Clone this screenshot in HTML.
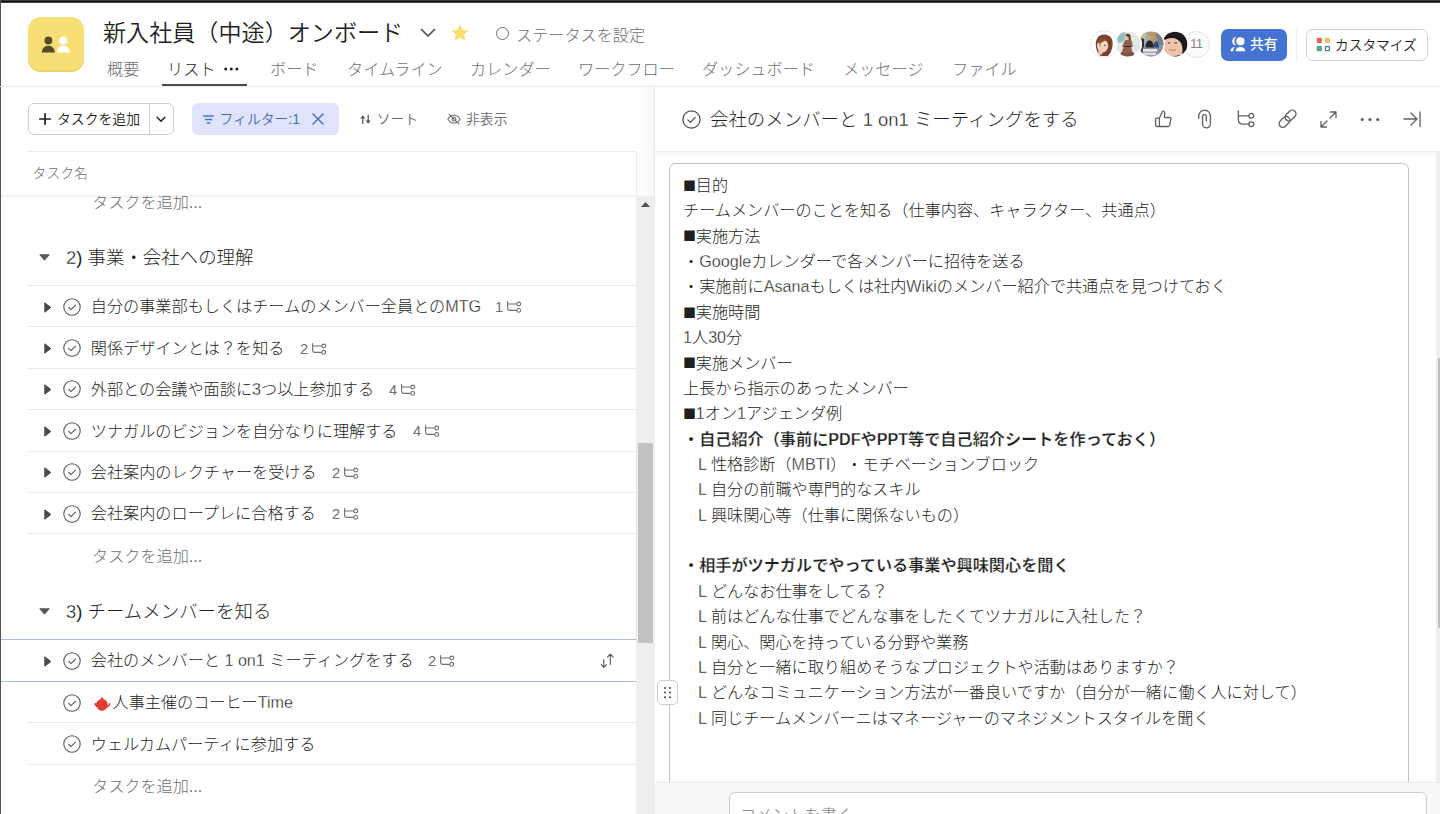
<!DOCTYPE html>
<html lang="ja">
<head>
<meta charset="utf-8">
<title>新入社員（中途）オンボード</title>
<style>
*{box-sizing:border-box;margin:0;padding:0}
html,body{width:1440px;height:814px;overflow:hidden;background:#fff}
body{font-family:"Liberation Sans","Noto Sans CJK JP",sans-serif;color:#1e1f21;position:relative;font-weight:400;text-spacing-trim:space-all}
.abs{position:absolute}
.t{position:absolute;white-space:nowrap;line-height:1}
svg{position:absolute;overflow:visible}
#topbar{left:0;top:0;width:1440px;height:3px;background:linear-gradient(#38393b 0,#38393b 33%,#131314 33%,#131314 67%,#3c3c3d 67%)}
#leftedge{left:0;top:0;width:1px;height:814px;background:#565656}
#picon{left:28.300px;top:16.800px;width:55.400px;height:54.800px;border-radius:13px;background:#f7df75;box-shadow:inset 0 -1.500px 0 rgba(210,180,70,.35)}
#title{left:103px;top:22px;font-size:23.1px;color:#1e1f21;font-weight:350}
  .tab{font-size:16.15px;color:#6d6e6f;top:61px;font-weight:300}
.hl{position:absolute;height:1px;background:#eeebea}
.vl{position:absolute;width:1px;background:#edeae9}
.g{color:#6d6e6f}
.btn{position:absolute;border:1px solid #cfcbcb;border-radius:6px;background:#fff}
.row{position:absolute;left:28px;width:608px;height:42px;border-top:1px solid #edeae9}
.rt{position:absolute;left:62.8px;top:12.4px;font-size:16.15px;line-height:1;white-space:nowrap;color:#1e1f21;font-weight:300}
.cnt{position:absolute;top:14.300px;font-size:14.600px;line-height:1;color:#6d6e6f;font-weight:300}
.sec{position:absolute;left:66px;font-size:18.45px;line-height:1;white-space:nowrap;color:#1e1f21;font-weight:300}
.addt{position:absolute;left:92px;font-size:16.15px;line-height:1;white-space:nowrap;color:#6d6e6f;font-weight:300}
.d{position:absolute;left:683px;font-size:16.15px;line-height:1;white-space:nowrap;color:#1e1f21;font-weight:300}
.d.b{font-weight:700;-webkit-text-stroke:.25px #fff}
.l{-webkit-text-stroke:.3px #fff}
.sq{font-size:21.400px;display:inline-block;width:12.600px;position:relative;top:.8px;line-height:0;margin-left:.2px}
</style>
</head>
<body>
<div class="abs" id="topbar"></div>
<div class="abs" id="leftedge"></div>
<div class="abs" id="picon">
<svg width="56" height="56" viewBox="0 0 56 56" style="left:0;top:0">
<circle cx="20.400" cy="23.500" r="3.900" fill="#574a28"/>
<path d="M13.900 35.600c0-4.600 2.900-6.900 6.450-6.900s6.450 2.300 6.450 6.900z" fill="#574a28"/>
<circle cx="35.250" cy="23.500" r="4.100" fill="#fff"/>
<path d="M28.800 35.600c0-4.600 2.900-6.900 6.500-6.900s6.500 2.300 6.500 6.900z" fill="#fff"/>
</svg>
</div>
<div class="t" id="title">新入社員（中途）オンボード</div>
<svg style="left:420px;top:28px" width="16" height="10" viewBox="0 0 16 10"><path d="M1.5 1.5 8 8l6.5-6.5" fill="none" stroke="#4a4b4d" stroke-width="1.7" stroke-linecap="round" stroke-linejoin="round"/></svg>
<svg style="left:451px;top:24px" width="18" height="18" viewBox="0 0 18 18"><path d="M9 1.2l2.3 5 5.4.6-4 3.7 1.1 5.4L9 13.2l-4.8 2.7 1.1-5.4-4-3.7 5.4-.6z" fill="#f8df72" stroke="#f8df72" stroke-width="1" stroke-linejoin="round"/></svg>
<div class="abs" style="left:496px;top:27px;width:13px;height:13px;border:1.3px solid #6d6e6f;border-radius:50%"></div>
<div class="t g" style="left:516px;top:26.7px;font-size:16.15px;font-weight:300">ステータスを設定</div>
<div class="t tab" style="left:107px">概要</div>
<div class="t tab" style="left:167px;color:#1e1f21;font-weight:300">リスト</div>
<div class="t tab" style="left:270px">ボード</div>
<div class="t tab" style="left:347px">タイムライン</div>
<div class="t tab" style="left:470px">カレンダー</div>
<div class="t tab" style="left:578px">ワークフロー</div>
<div class="t tab" style="left:702px">ダッシュボード</div>
<div class="t tab" style="left:843px">メッセージ</div>
<div class="t tab" style="left:952px">ファイル</div>
<svg style="left:224px;top:67px" width="15" height="4" viewBox="0 0 15 4"><circle cx="1.7" cy="2" r="1.5" fill="#1e1f21"/><circle cx="7.3" cy="2" r="1.5" fill="#1e1f21"/><circle cx="12.9" cy="2" r="1.5" fill="#1e1f21"/></svg>
<div class="abs" style="left:162px;top:84px;width:85px;height:2px;background:#4a4b4d"></div>
<div class="hl" style="left:0;top:86px;width:1440px"></div>
<div class="abs" style="left:1183px;top:30.500px;width:27px;height:27px;border-radius:50%;border:1px solid #e4e2e2;background:#fbfbfb"></div><div class="t g" style="left:1190.300px;top:38.200px;font-size:12.500px;font-weight:400;color:#808183;letter-spacing:-.3px">11</div>
<svg style="left:1090.2px;top:30.200px;z-index:10" width="28" height="28" viewBox="0 0 28 28"><defs><clipPath id="c0"><circle cx="14" cy="14" r="12.400"/></clipPath></defs><circle cx="14" cy="14" r="14" fill="#fff"/><circle cx="14" cy="14" r="13.400" fill="none" stroke="#eadcf2" stroke-width=".8"/><g clip-path="url(#c0)"><rect width="28" height="28" fill="#fff"/><path d="M6 17c-1-7 2-12.500 8-12.500 6.500 0 9.500 5 8.500 11-.5 4-2 8-4.500 10.500H10.500C8 23.500 6.500 21 6 17z" fill="#7a3f28"/><ellipse cx="12.600" cy="15.800" rx="5.600" ry="6.600" fill="#f2d3c0"/><path d="M7 12c2-4 7-5 11-2-3 .5-6 1.500-8 4z" fill="#8a4a30"/><ellipse cx="10" cy="15.300" rx="1" ry=".8" fill="#4b6a86"/><ellipse cx="15" cy="15.300" rx="1" ry=".8" fill="#4b6a86"/><path d="M8.500 20c0-2 1.200-5 2.200-5s1 2 1.300 4c.8 1.500 1 3.500 0 5.500H8.500z" fill="#efc9b2"/></g></svg>
<svg style="left:1113.6px;top:30.200px;z-index:9" width="28" height="28" viewBox="0 0 28 28"><defs><clipPath id="c1"><circle cx="14" cy="14" r="12.400"/></clipPath></defs><circle cx="14" cy="14" r="14" fill="#fff"/><circle cx="14" cy="14" r="13.400" fill="none" stroke="#fff" stroke-width=".8"/><g clip-path="url(#c1)"><rect width="28" height="28" fill="#e4e7e4"/><path d="M0 0h12v11c-3 2-8 3-12 1z" fill="#b9d3d2"/><path d="M2 2c4-2 8-1 9 3s-2 7-6 7-5-6-3-10z" fill="#8fbfc0"/><rect x="0" y="21" width="28" height="7" fill="#efeeec"/><circle cx="13.800" cy="6.800" r="2.600" fill="#e3bda4"/><path d="M11.500 5.500c.5-2.500 4.500-2.500 5 .5l.5 5h-2l-.5-4z" fill="#5d3a2a"/><path d="M11 10.500c2-1.500 5-1.500 6.500 0l1.500 6-2 .5 2.500 8.500c-4 1.500-9 1.500-13 0L9.500 17l-1.500-.5z" fill="#8c6049"/><path d="M10.500 16.500h7" stroke="#3c2a22" stroke-width="1"/><path d="M7 22c3 1 8 1.500 12.500 0l.8 3.500c-5 1.500-10 1.500-14.500 0z" fill="#7a5340"/></g></svg>
<svg style="left:1137px;top:30.200px;z-index:8" width="28" height="28" viewBox="0 0 28 28"><defs><clipPath id="c2"><circle cx="14" cy="14" r="12.400"/></clipPath></defs><circle cx="14" cy="14" r="14" fill="#fff"/><circle cx="14" cy="14" r="13.400" fill="none" stroke="#fff" stroke-width=".8"/><g clip-path="url(#c2)"><rect width="28" height="28" fill="#8f9aa2"/><rect x="11" y="2" width="8" height="11" fill="#b39a68"/><rect x="19" y="2" width="9" height="13" fill="#77838d"/><rect x="2" y="2" width="9" height="12" fill="#9fb0bd"/><path d="M3 3l6 1-1 5-5-1z" fill="#c9c27a"/><circle cx="12.600" cy="8" r="2" fill="#c99f85"/><path d="M8.500 19c0-6 1.500-8.500 4-8.500s4.500 2.500 4.500 8.500z" fill="#23262b"/><circle cx="19" cy="9.500" r="1.600" fill="#b98f78"/><path d="M16.500 19c0-5 1-7.500 2.700-7.500S22 14 22 19z" fill="#2e4a6e"/><path d="M4 8l3 1v10H4z" fill="#2b2d31"/><rect x="2" y="17.500" width="24" height="9" fill="#8b8f96"/><rect x="6" y="19" width="14" height="2.600" fill="#e9eaec"/><rect x="6" y="22.600" width="13" height="2.600" fill="#dfe0e3"/><rect x="2" y="17.500" width="4" height="9" fill="#4a4d52"/></g></svg>
<svg style="left:1160.6px;top:30.200px;z-index:7" width="28" height="28" viewBox="0 0 28 28"><defs><clipPath id="c3"><circle cx="14" cy="14" r="12.400"/></clipPath></defs><circle cx="14" cy="14" r="14" fill="#fff"/><circle cx="14" cy="14" r="13.400" fill="none" stroke="#fff" stroke-width=".8"/><g clip-path="url(#c3)"><rect width="28" height="28" fill="#e8bca3"/><ellipse cx="12" cy="15" rx="9" ry="10.500" fill="#edc4ab"/><path d="M2 9C4 4 9 2 14 2c5 0 9 2 11 6 2 5 2 13 0 20h-5c2-5 2-11 0-15-2-3-5-5-9-5-4 0-7 1-9 4z" fill="#1c1819"/><path d="M1 20c1 2 3 4 5 5l-1 3H1z" fill="#2c8a92"/><path d="M4 25.500c4 1.500 9 1.500 14-.5l5 3H3z" fill="#222021"/><path d="M8 19.500c2 1.300 5 1.300 7 0" stroke="#c4736a" stroke-width="1" fill="none"/><ellipse cx="8" cy="12.800" rx="1.400" ry=".6" fill="#3a2a26"/><ellipse cx="14.800" cy="12.800" rx="1.400" ry=".6" fill="#3a2a26"/></g></svg>
<div class="abs" style="left:1221.300px;top:28.700px;width:65.700px;height:32px;border-radius:7px;background:#4573d2"></div>
<svg style="left:1230px;top:37px" width="16" height="15" viewBox="0 0 16 15"><circle cx="10.400" cy="4.300" r="4.100" fill="#fff"/><path d="M5.600 14.300c0-2.900 2-4.300 4.800-4.300s4.800 1.400 4.800 4.300z" fill="#fff"/><path d="M5.800.3A4.100 4.100 0 0 0 5.600 8.300 5.600 5.600 0 0 1 5.800.3z" fill="#fff" stroke="#fff" stroke-width=".6"/><path d="M.5 14.300c0-2.600 1.700-4 4.300-4.200-1 1-1.500 2.400-1.500 4.200z" fill="#fff"/></svg>
<div class="t" style="left:1250px;top:38px;font-size:13.840px;color:#fff;font-weight:500">共有</div>
<div class="vl" style="left:1296px;top:29px;height:32px;background:#f0eeed"></div>
<div class="btn" style="left:1306px;top:28.700px;width:122px;height:32px;border-color:#d5d2d1;border-radius:7px"></div>
<svg style="left:1316px;top:37px" width="15" height="15" viewBox="0 0 15 15"><rect x="0.700" y="0.800" width="5.200" height="5.200" rx="1" fill="#e8645a"/><rect x="8.800" y="0.800" width="5.200" height="5.200" rx="1" fill="#f1bd6c"/><rect x="0.700" y="9" width="5.200" height="5.200" rx="1" fill="#5da283"/><rect x="9.400" y="9.600" width="4" height="4" rx="0.300" fill="none" stroke="#4573d2" stroke-width="1.200"/></svg>
<div class="t" style="left:1335px;top:38.500px;font-size:13.700px;color:#1e1f21;font-weight:350">カスタマイズ</div>
<div class="btn" style="left:28px;top:103px;width:146px;height:32px"></div><div class="vl" style="left:149px;top:104px;height:30px;background:#d5d2d1"></div>
<svg style="left:39px;top:113px" width="12" height="12" viewBox="0 0 12 12"><path d="M6 0.8v10.400M0.8 6h10.400" stroke="#1e1f21" stroke-width="1.7" stroke-linecap="round"/></svg>
<div class="t" style="left:57px;top:113px;font-size:13.84px;font-weight:350">タスクを追加</div>
<svg style="left:156px;top:116px" width="10" height="7" viewBox="0 0 10 7"><path d="M1.200 1.200 5 5.200l3.800-4" fill="none" stroke="#1e1f21" stroke-width="1.5" stroke-linecap="round" stroke-linejoin="round"/></svg>
<div class="abs" style="left:192px;top:103px;width:147px;height:32px;border-radius:6px;background:#dfe3fc"></div>
<svg style="left:203px;top:115px" width="11" height="9" viewBox="0 0 11 9"><path d="M0.700 1h9.600M2.400 4.500h6.200M4.200 8h2.600" stroke="#4573d2" stroke-width="1.300" stroke-linecap="round"/></svg>
<div class="t" style="left:219.5px;top:112.5px;font-size:13.84px;color:#3f6ac4;font-weight:350">フィルター:1</div>
<svg style="left:312px;top:113px" width="12" height="12" viewBox="0 0 12 12"><path d="M1 1l10 10M11 1 1 11" stroke="#3f6ac4" stroke-width="1.400" stroke-linecap="round"/></svg>
<svg style="left:359.5px;top:114.5px" width="11" height="9" viewBox="0 0 11 9"><path d="M2.800 8.500V2.500M8.200 0.500v6" fill="none" stroke="#57585a" stroke-width="1.300" stroke-linecap="round"/><path d="M0.200 3.600 2.800 0.200l2.600 3.400zM5.600 5.400l2.600 3.400 2.600-3.400z" fill="#57585a"/></svg>
<div class="t g" style="left:376.8px;top:113.3px;font-size:13.84px;font-weight:350">ソート</div>
<svg style="left:447px;top:113px" width="14" height="12.300" viewBox="0 0 16 14"><path d="M1 7c1.800-3 4.200-4.500 7-4.500S13.200 4 15 7c-1.800 3-4.200 4.500-7 4.500S2.800 10 1 7z" fill="none" stroke="#6d6e6f" stroke-width="1.200"/><circle cx="8" cy="7" r="2.200" fill="none" stroke="#6d6e6f" stroke-width="1.200"/><path d="M2.500 1.500l11 11" stroke="#6d6e6f" stroke-width="1.200" stroke-linecap="round"/></svg>
<div class="t g" style="left:466px;top:113.3px;font-size:13.84px;font-weight:350">非表示</div>
<div class="hl" style="left:28px;top:151px;width:609px"></div>
<div class="vl" style="left:636px;top:151px;height:663px"></div>
<div class="t g" style="left:32.6px;top:166.5px;font-size:13.84px;font-weight:300">タスク名</div>
<div class="abs" style="left:1px;top:195px;width:636px;height:4px;background:linear-gradient(#f1efee,#fff)"></div>
<div class="abs" style="left:1px;top:196px;width:635px;height:30px;overflow:hidden"><div class="addt" style="left:91px;top:-2px">タスクを追加...</div></div>
<svg style="left:39px;top:254.3px" width="11" height="7" viewBox="0 0 11 7"><path d="M0.800 0.800h9.400L5.500 6.200z" fill="#56575a" stroke="#56575a" stroke-width="1" stroke-linejoin="round"/></svg>
<div class="sec" style="top:249px"><span class="l">2</span>) 事業・会社への理解</div>
<div class="row" style="top:285.0px"><svg style="left:15.700px;top:15.500px" width="8" height="11" viewBox="0 0 8 11"><path d="M0.800 0.800 6.800 5.500 0.800 10.200z" fill="#4a4b4d" stroke="#4a4b4d" stroke-width="1" stroke-linejoin="round"/></svg><svg style="left:35px;top:11.7px" width="18" height="18" viewBox="0 0 18 18"><circle cx="9" cy="9" r="8.2" fill="none" stroke="#58595b" stroke-width="1.100"/><path d="M5.600 9.400l2.400 2.300 4.500-4.600" fill="none" stroke="#58595b" stroke-width="1.100" stroke-linecap="round" stroke-linejoin="round"/></svg><div class="rt">自分の事業部もしくはチームのメンバー全員との<span class="l">MTG</span></div><div class="cnt" style="left:467px">1</div><svg style="left:478.7px;top:15.300px" width="15" height="12" viewBox="0 0 15 12"><path d="M0.600 0.500v6.400c0 1.600.9 2.500 2.500 2.500H9.400M0.600 3H9.400" fill="none" stroke="#6d6e6f" stroke-width="1.100" stroke-linecap="round"/><circle cx="11.700" cy="3" r="1.900" fill="none" stroke="#6d6e6f" stroke-width="1.100"/><circle cx="11.700" cy="9.400" r="1.900" fill="none" stroke="#6d6e6f" stroke-width="1.100"/></svg></div>
<div class="row" style="top:326.4px"><svg style="left:15.700px;top:15.500px" width="8" height="11" viewBox="0 0 8 11"><path d="M0.800 0.800 6.800 5.500 0.800 10.200z" fill="#4a4b4d" stroke="#4a4b4d" stroke-width="1" stroke-linejoin="round"/></svg><svg style="left:35px;top:11.7px" width="18" height="18" viewBox="0 0 18 18"><circle cx="9" cy="9" r="8.2" fill="none" stroke="#58595b" stroke-width="1.100"/><path d="M5.600 9.400l2.400 2.300 4.500-4.600" fill="none" stroke="#58595b" stroke-width="1.100" stroke-linecap="round" stroke-linejoin="round"/></svg><div class="rt">関係デザインとは？を知る</div><div class="cnt" style="left:272px">2</div><svg style="left:283.7px;top:15.300px" width="15" height="12" viewBox="0 0 15 12"><path d="M0.600 0.500v6.400c0 1.600.9 2.500 2.500 2.500H9.400M0.600 3H9.400" fill="none" stroke="#6d6e6f" stroke-width="1.100" stroke-linecap="round"/><circle cx="11.700" cy="3" r="1.900" fill="none" stroke="#6d6e6f" stroke-width="1.100"/><circle cx="11.700" cy="9.400" r="1.900" fill="none" stroke="#6d6e6f" stroke-width="1.100"/></svg></div>
<div class="row" style="top:367.8px"><svg style="left:15.700px;top:15.500px" width="8" height="11" viewBox="0 0 8 11"><path d="M0.800 0.800 6.800 5.500 0.800 10.200z" fill="#4a4b4d" stroke="#4a4b4d" stroke-width="1" stroke-linejoin="round"/></svg><svg style="left:35px;top:11.7px" width="18" height="18" viewBox="0 0 18 18"><circle cx="9" cy="9" r="8.2" fill="none" stroke="#58595b" stroke-width="1.100"/><path d="M5.600 9.400l2.400 2.300 4.500-4.600" fill="none" stroke="#58595b" stroke-width="1.100" stroke-linecap="round" stroke-linejoin="round"/></svg><div class="rt">外部との会議や面談に<span class="l">3</span>つ以上参加する</div><div class="cnt" style="left:361px">4</div><svg style="left:372.7px;top:15.300px" width="15" height="12" viewBox="0 0 15 12"><path d="M0.600 0.500v6.400c0 1.600.9 2.500 2.500 2.500H9.400M0.600 3H9.400" fill="none" stroke="#6d6e6f" stroke-width="1.100" stroke-linecap="round"/><circle cx="11.700" cy="3" r="1.900" fill="none" stroke="#6d6e6f" stroke-width="1.100"/><circle cx="11.700" cy="9.400" r="1.900" fill="none" stroke="#6d6e6f" stroke-width="1.100"/></svg></div>
<div class="row" style="top:409.2px"><svg style="left:15.700px;top:15.500px" width="8" height="11" viewBox="0 0 8 11"><path d="M0.800 0.800 6.800 5.500 0.800 10.200z" fill="#4a4b4d" stroke="#4a4b4d" stroke-width="1" stroke-linejoin="round"/></svg><svg style="left:35px;top:11.7px" width="18" height="18" viewBox="0 0 18 18"><circle cx="9" cy="9" r="8.2" fill="none" stroke="#58595b" stroke-width="1.100"/><path d="M5.600 9.400l2.400 2.300 4.500-4.600" fill="none" stroke="#58595b" stroke-width="1.100" stroke-linecap="round" stroke-linejoin="round"/></svg><div class="rt">ツナガルのビジョンを自分なりに理解する</div><div class="cnt" style="left:385px">4</div><svg style="left:396.7px;top:15.300px" width="15" height="12" viewBox="0 0 15 12"><path d="M0.600 0.500v6.400c0 1.600.9 2.500 2.500 2.500H9.400M0.600 3H9.400" fill="none" stroke="#6d6e6f" stroke-width="1.100" stroke-linecap="round"/><circle cx="11.700" cy="3" r="1.900" fill="none" stroke="#6d6e6f" stroke-width="1.100"/><circle cx="11.700" cy="9.400" r="1.900" fill="none" stroke="#6d6e6f" stroke-width="1.100"/></svg></div>
<div class="row" style="top:450.6px"><svg style="left:15.700px;top:15.500px" width="8" height="11" viewBox="0 0 8 11"><path d="M0.800 0.800 6.800 5.500 0.800 10.200z" fill="#4a4b4d" stroke="#4a4b4d" stroke-width="1" stroke-linejoin="round"/></svg><svg style="left:35px;top:11.7px" width="18" height="18" viewBox="0 0 18 18"><circle cx="9" cy="9" r="8.2" fill="none" stroke="#58595b" stroke-width="1.100"/><path d="M5.600 9.400l2.400 2.300 4.500-4.600" fill="none" stroke="#58595b" stroke-width="1.100" stroke-linecap="round" stroke-linejoin="round"/></svg><div class="rt">会社案内のレクチャーを受ける</div><div class="cnt" style="left:304px">2</div><svg style="left:315.7px;top:15.300px" width="15" height="12" viewBox="0 0 15 12"><path d="M0.600 0.500v6.400c0 1.600.9 2.500 2.500 2.500H9.400M0.600 3H9.400" fill="none" stroke="#6d6e6f" stroke-width="1.100" stroke-linecap="round"/><circle cx="11.700" cy="3" r="1.900" fill="none" stroke="#6d6e6f" stroke-width="1.100"/><circle cx="11.700" cy="9.400" r="1.900" fill="none" stroke="#6d6e6f" stroke-width="1.100"/></svg></div>
<div class="row" style="top:492.0px"><svg style="left:15.700px;top:15.500px" width="8" height="11" viewBox="0 0 8 11"><path d="M0.800 0.800 6.800 5.500 0.800 10.200z" fill="#4a4b4d" stroke="#4a4b4d" stroke-width="1" stroke-linejoin="round"/></svg><svg style="left:35px;top:11.7px" width="18" height="18" viewBox="0 0 18 18"><circle cx="9" cy="9" r="8.2" fill="none" stroke="#58595b" stroke-width="1.100"/><path d="M5.600 9.400l2.400 2.300 4.500-4.600" fill="none" stroke="#58595b" stroke-width="1.100" stroke-linecap="round" stroke-linejoin="round"/></svg><div class="rt">会社案内のロープレに合格する</div><div class="cnt" style="left:304px">2</div><svg style="left:315.7px;top:15.300px" width="15" height="12" viewBox="0 0 15 12"><path d="M0.600 0.500v6.400c0 1.600.9 2.500 2.500 2.500H9.400M0.600 3H9.400" fill="none" stroke="#6d6e6f" stroke-width="1.100" stroke-linecap="round"/><circle cx="11.700" cy="3" r="1.900" fill="none" stroke="#6d6e6f" stroke-width="1.100"/><circle cx="11.700" cy="9.400" r="1.900" fill="none" stroke="#6d6e6f" stroke-width="1.100"/></svg></div>
<div class="hl" style="left:28px;top:533.4px;width:608px"></div>
<div class="addt" style="top:548px">タスクを追加...</div>
<svg style="left:39px;top:608.3px" width="11" height="7" viewBox="0 0 11 7"><path d="M0.800 0.800h9.400L5.500 6.200z" fill="#56575a" stroke="#56575a" stroke-width="1" stroke-linejoin="round"/></svg>
<div class="sec" style="top:603px"><span class="l">3</span>) チームメンバーを知る</div>
<div class="row" style="top:639px;border-top-color:transparent"><svg style="left:15.700px;top:15.500px" width="8" height="11" viewBox="0 0 8 11"><path d="M0.800 0.800 6.800 5.500 0.800 10.200z" fill="#4a4b4d" stroke="#4a4b4d" stroke-width="1" stroke-linejoin="round"/></svg><svg style="left:35px;top:11.7px" width="18" height="18" viewBox="0 0 18 18"><circle cx="9" cy="9" r="8.2" fill="none" stroke="#58595b" stroke-width="1.100"/><path d="M5.600 9.400l2.400 2.300 4.500-4.600" fill="none" stroke="#58595b" stroke-width="1.100" stroke-linecap="round" stroke-linejoin="round"/></svg><div class="rt">会社のメンバーと <span class="l">1 on1</span> ミーティングをする</div><div class="cnt" style="left:400px">2</div><svg style="left:411.7px;top:15.300px" width="15" height="12" viewBox="0 0 15 12"><path d="M0.600 0.500v6.400c0 1.600.9 2.500 2.500 2.500H9.400M0.600 3H9.400" fill="none" stroke="#6d6e6f" stroke-width="1.100" stroke-linecap="round"/><circle cx="11.700" cy="3" r="1.900" fill="none" stroke="#6d6e6f" stroke-width="1.100"/><circle cx="11.700" cy="9.400" r="1.900" fill="none" stroke="#6d6e6f" stroke-width="1.100"/></svg><svg style="left:571.500px;top:13px" width="16" height="16" viewBox="0 0 16 16"><path d="M3.800 6.500v7.700M1.200 11.600l2.600 2.700 2.600-2.700M10.300 11.500V1.200M7.500 4l2.800-2.900L13.100 4" fill="none" stroke="#57585a" stroke-width="1.100" stroke-linecap="round" stroke-linejoin="round"/></svg></div>
<div class="row" style="top:681px"><svg style="left:35px;top:11.7px" width="18" height="18" viewBox="0 0 18 18"><circle cx="9" cy="9" r="8.2" fill="none" stroke="#58595b" stroke-width="1.100"/><path d="M5.600 9.400l2.400 2.300 4.500-4.600" fill="none" stroke="#58595b" stroke-width="1.100" stroke-linecap="round" stroke-linejoin="round"/></svg><div class="rt"><span style="display:inline-block;width:21.700px"></span>人事主催のコーヒー<span class="l">Time</span></div><svg style="left:66px;top:15px" width="17" height="15" viewBox="0 0 17 15"><path d="M7 1.200c0-.8 2.400-.8 2.400 0v1c2.600.5 4.300 2.600 4.300 5.400 0 .4 0 .8-.1 1.200 1-.6 1.500-1.600 1.700-2.800l1.300.3c-.3 2.200-1.500 3.800-3.700 4.500-.9 1.700-2.600 2.900-4.700 2.900-2.300 0-4.200-1.300-5-3.300C1.600 9.800.5 8.200.2 6.200L2.600 6c.3-1.900 2-3.400 4.400-3.800z" fill="#e53a2f"/></svg></div>
<div class="row" style="top:722.4px"><svg style="left:35px;top:11.7px" width="18" height="18" viewBox="0 0 18 18"><circle cx="9" cy="9" r="8.2" fill="none" stroke="#58595b" stroke-width="1.100"/><path d="M5.600 9.400l2.400 2.300 4.500-4.600" fill="none" stroke="#58595b" stroke-width="1.100" stroke-linecap="round" stroke-linejoin="round"/></svg><div class="rt">ウェルカムパーティに参加する</div></div>
<div class="hl" style="left:28px;top:763.8px;width:608px"></div>
<div class="addt" style="top:778px">タスクを追加...</div>
<div class="hl" style="left:1px;top:639px;width:635px;background:#aebbe9"></div><div class="hl" style="left:1px;top:681px;width:635px;background:#aebbe9"></div>
<div class="abs" style="left:637px;top:87px;width:17px;height:109px;background:linear-gradient(90deg,#fff,#f8f7f7)"></div>
<div class="abs" style="left:637px;top:196px;width:17.500px;height:618px;background:#eeeeee"></div>
<svg style="left:641px;top:202px" width="9" height="5" viewBox="0 0 9 5"><path d="M4.500 0 9 5H0z" fill="#505050"/></svg>
<div class="abs" style="left:638px;top:443px;width:15px;height:200px;background:#c1c1c1"></div>
<div class="vl" style="left:654px;top:87px;height:109px;background:#e8e6e5"></div>
<svg style="left:682px;top:110px" width="19" height="19" viewBox="0 0 19 19"><circle cx="9.500" cy="9.500" r="8.600" fill="none" stroke="#4a4b4d" stroke-width="1.200"/><path d="M5.800 9.900l2.600 2.500 4.800-5" fill="none" stroke="#4a4b4d" stroke-width="1.200" stroke-linecap="round" stroke-linejoin="round"/></svg>
<div class="t" style="left:710px;top:111px;font-size:18.460px;font-weight:300">会社のメンバーと <span class="l">1 on1</span> ミーティングをする</div>
<svg style="left:1154px;top:110px" width="18" height="18" viewBox="0 0 18 18"><rect x="1.600" y="8.100" width="3.800" height="8.400" rx="1.200" fill="none" stroke="#5f6062" stroke-width="1.300" stroke-linecap="round" stroke-linejoin="round"/><path d="M5.400 8.100 8.200 2Q8.900.9 9.900 1.500 10.900 2.100 10.700 3.500L10.500 7.500H15.500Q17.200 7.500 16.900 9.200L15.700 15.200Q15.400 16.500 14.100 16.500H5.400" fill="none" stroke="#5f6062" stroke-width="1.300" stroke-linecap="round" stroke-linejoin="round"/></svg>
<svg style="left:1198px;top:109px" width="13" height="20" viewBox="0 0 13 20"><path d="M.75 9.300V7A5.800 5.800 0 0 1 12.400 7V15A3.950 3.950 0 0 1 4.500 15V7.500A1.900 1.900 0 0 1 8.300 7.500V11.800" fill="none" stroke="#5f6062" stroke-width="1.300" stroke-linecap="round" stroke-linejoin="round"/></svg>
<svg style="left:1237px;top:110px" width="18" height="18" viewBox="0 0 18 18"><path d="M1.300.8V9.200Q1.300 14.200 6.300 14.200H11.800M1.300 5.800H11.800" fill="none" stroke="#5f6062" stroke-width="1.300" stroke-linecap="round" stroke-linejoin="round"/><circle cx="14.250" cy="5.800" r="2.400" fill="none" stroke="#5f6062" stroke-width="1.300" stroke-linecap="round" stroke-linejoin="round"/><circle cx="14.250" cy="14.200" r="2.400" fill="none" stroke="#5f6062" stroke-width="1.300" stroke-linecap="round" stroke-linejoin="round"/></svg>
<svg style="left:1278px;top:109px" width="20" height="20" viewBox="0 0 20 20"><g transform="translate(12.600 6.500) rotate(-45)"><rect x="-6.100" y="-3.700" width="12.200" height="7.400" rx="3.700" fill="none" stroke="#5f6062" stroke-width="1.300" stroke-linecap="round" stroke-linejoin="round"/></g><g transform="translate(6.500 12.900) rotate(-45)"><rect x="-6.100" y="-3.700" width="12.200" height="7.400" rx="3.700" fill="none" stroke="#5f6062" stroke-width="1.300" stroke-linecap="round" stroke-linejoin="round"/></g></svg>
<svg style="left:1320px;top:110.500px" width="17" height="17" viewBox="0 0 17 17"><path d="M10.500 1H16v5.500M16 1 10 7M6.500 16H1v-5.500M1 16l6-6" fill="none" stroke="#5f6062" stroke-width="1.300" stroke-linecap="round" stroke-linejoin="round"/></svg>
<svg style="left:1360px;top:117px" width="20" height="5" viewBox="0 0 20 5"><circle cx="2.300" cy="2.500" r="1.600" fill="#5f6062"/><circle cx="10" cy="2.500" r="1.600" fill="#5f6062"/><circle cx="17.700" cy="2.500" r="1.600" fill="#5f6062"/></svg>
<svg style="left:1403px;top:111px" width="18" height="16" viewBox="0 0 18 16"><path d="M1 8h12.500M8 2l6 6-6 6M17 1v14.500" fill="none" stroke="#5f6062" stroke-width="1.300" stroke-linecap="round" stroke-linejoin="round"/></svg>
<div class="hl" style="left:655px;top:151px;width:785px;background:#efedec"></div>
<div class="abs" style="left:655px;top:152px;width:785px;height:5px;background:linear-gradient(#f7f6f6,#fff)"></div>
<div class="abs" style="left:668.600px;top:163px;width:740.400px;height:640px;border:1.300px solid #c4c1c1;border-radius:6.500px"></div>
<div class="d" style="top:177.0px"><span class="sq">■</span>目的</div>
<div class="d" style="top:202.4px">チームメンバーのことを知る（仕事内容、キャラクター、共通点）</div>
<div class="d" style="top:227.7px"><span class="sq">■</span>実施方法</div>
<div class="d" style="top:253.1px">・<span class="l">Google</span>カレンダーで各メンバーに招待を送る</div>
<div class="d" style="top:278.4px">・実施前に<span class="l">Asana</span>もしくは社内<span class="l">Wiki</span>のメンバー紹介で共通点を見つけておく</div>
<div class="d" style="top:303.8px"><span class="sq">■</span>実施時間</div>
<div class="d" style="top:329.2px"><span class="l">1</span>人<span class="l">30</span>分</div>
<div class="d" style="top:354.5px"><span class="sq">■</span>実施メンバー</div>
<div class="d" style="top:379.9px">上長から指示のあったメンバー</div>
<div class="d" style="top:405.2px"><span class="sq">■</span><span class="l">1</span>オン<span class="l">1</span>アジェンダ例</div>
<div class="d b" style="top:430.6px">・自己紹介（事前にPDFやPPT等で自己紹介シートを作っておく）</div>
<div class="d" style="top:456.0px;left:698px"><span class="l">L</span> 性格診断（<span class="l">MBTI</span>）・モチベーションブロック</div>
<div class="d" style="top:481.3px;left:698px"><span class="l">L</span> 自分の前職や専門的なスキル</div>
<div class="d" style="top:506.7px;left:698px"><span class="l">L</span> 興味関心等（仕事に関係ないもの）</div>
<div class="d b" style="top:557.4px">・相手がツナガルでやっている事業や興味関心を聞く</div>
<div class="d" style="top:582.8px;left:698px"><span class="l">L</span> どんなお仕事をしてる？</div>
<div class="d" style="top:608.1px;left:698px"><span class="l">L</span> 前はどんな仕事でどんな事をしたくてツナガルに入社した？</div>
<div class="d" style="top:633.5px;left:698px"><span class="l">L</span> 関心、関心を持っている分野や業務</div>
<div class="d" style="top:658.8px;left:698px"><span class="l">L</span> 自分と一緒に取り組めそうなプロジェクトや活動はありますか？</div>
<div class="d" style="top:684.2px;left:698px"><span class="l">L</span> どんなコミュニケーション方法が一番良いですか（自分が一緒に働く人に対して）</div>
<div class="d" style="top:709.6px;left:698px"><span class="l">L</span> 同じチームメンバーニはマネージャーのマネジメントスタイルを聞く</div>
<div class="abs" style="left:657px;top:680px;width:20.500px;height:24.500px;border:1px solid #cfcbcb;border-radius:5px;background:#fff"></div>
<svg style="left:663px;top:686px" width="9" height="13" viewBox="0 0 9 13"><g fill="#3f4042"><circle cx="2" cy="2" r="1"/><circle cx="7" cy="2" r="1"/><circle cx="2" cy="6.600" r="1"/><circle cx="7" cy="6.600" r="1"/><circle cx="2" cy="11.300" r="1"/><circle cx="7" cy="11.300" r="1"/></g></svg>
<div class="abs" style="left:655px;top:782px;width:785px;height:32px;background:#f9f8f8;border-top:1px solid #ebe9e8"></div>
<div class="abs" style="left:729px;top:792px;width:698px;height:40px;border:1px solid #cfcbcb;border-radius:6px;background:#fff"></div>
<div class="t" style="left:740px;top:807px;font-size:16.150px;color:#7b7c7e;font-weight:300">コメントを書く</div>
<div class="abs" style="left:1436px;top:152px;width:4px;height:630px;background:#efefef"></div>
<div class="abs" style="left:1438px;top:358px;width:2px;height:270px;background:#bdbdbd"></div>
</body>
</html>
